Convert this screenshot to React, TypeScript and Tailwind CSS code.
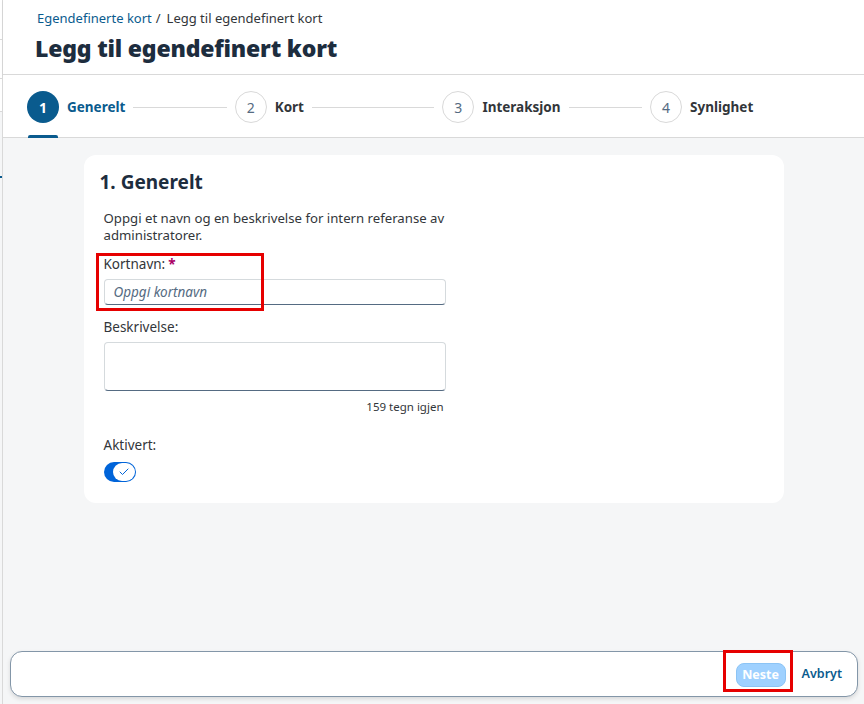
import { Check } from "lucide-react";

const steps = [
  { n: 1, label: "Generelt" },
  { n: 2, label: "Kort" },
  { n: 3, label: "Interaksjon" },
  { n: 4, label: "Synlighet" },
];

function Stepper() {
  return (
    <div className="h-[63px] bg-white border-b border-[#d9d9d9] flex items-center pl-[24px] pr-[6px] pt-[2px]">
      {steps.map((s, i) => {
        const active = i === 0;
        return (
          <div key={s.n} className="relative flex items-center w-[207.7px] h-full">
            <div
              className={
                active
                  ? "w-[32px] h-[32px] rounded-full flex items-center justify-center text-[14px] font-bold text-white bg-[#0a5b8e]"
                  : "w-[32px] h-[32px] rounded-full flex items-center justify-center text-[14px] text-[#556b82] bg-white border border-[#d9d9d9]"
              }
            >
              {s.n}
            </div>
            <span
              className={
                "ml-[8px] text-[13.5px] font-bold " + (active ? "text-[#0a5b8e]" : "text-[#32363a]")
              }
            >
              {s.label}
            </span>
            {i < steps.length - 1 && <div className="flex-1 h-px bg-[#d9d9d9] mx-[8px]" />}
            {active && (
              <div className="absolute left-[1px] bottom-[-1px] w-[30px] h-[3px] rounded-t-[2px] bg-[#0a5b8e]" />
            )}
          </div>
        );
      })}
    </div>
  );
}

export default function App() {
  return (
    <div
      className="flex w-[864px] h-[704px] overflow-hidden bg-white text-[#32363a]"
      style={{ fontFamily: '"Noto Sans", "Liberation Sans", sans-serif' }}
    >
      {/* sliver of previous page */}
      <div className="w-[3px] shrink-0 flex flex-col border-r border-[#d9d9d9] bg-white">
        <div className="h-[40px] border-b border-[#d9d9d9]" />
        <div className="h-[39px] border-b border-[#d9d9d9]" />
        <div className="h-[33px] border-b border-[#d9d9d9]" />
        <div className="h-[66px] border-b-2 border-[#0a5b8e] bg-[#f5f6f7]" />
        <div className="flex-1 bg-[#f5f6f7]" />
      </div>

      <div className="flex-1 flex flex-col min-w-0">
        {/* Header */}
        <div className="h-[75px] bg-white border-b border-[#d9d9d9] pl-[32px] pt-[9px] shadow-[0_1px_2px_rgba(0,0,0,0.06)]">
          <div className="pl-[2px] text-[13px] leading-[18px] text-[#32363a]">
            <span className="text-[#0a5b8e]">Egendefinerte kort</span>
            <span className="ml-[4px] mr-[6px]">/</span>
            <span>Legg til egendefinert kort</span>
          </div>
          <h1 className="mt-[6px] text-[23px] leading-[30px] font-black text-[#1d2d3e] tracking-[-0.2px]">
            Legg til egendefinert kort
          </h1>
        </div>

        <Stepper />

        {/* Content */}
        <div className="flex-1 bg-[#f5f6f7] flex flex-col">
          <div className="pt-[17px]">
            <div className="mx-auto w-[700px] h-[348px] bg-white rounded-[12px] pt-[14px] px-[16px]">
              <h2 className="text-[19px] leading-[26px] font-bold text-[#1d2d3e]">1. Generelt</h2>
              <div className="pl-[4px] w-[350px]">
                <p className="mt-[15px] text-[13.2px] leading-[17px] text-[#32363a]">
                  Oppgi et navn og en beskrivelse for intern referanse av administratorer.
                </p>

                <div className="relative mt-[11px]">
                  <label className="block text-[13.5px] leading-[18px] text-[#556b82]">
                    <span className="text-[#32363a]">Kortnavn:</span>
                    <span className="ml-[3px] font-bold text-[#aa0066]">*</span>
                  </label>
                  <div className="mt-[6px] h-[26px] w-[342px] rounded-[4px] border border-[#d5dadd] border-b-[#556b82] flex items-center px-[9px]">
                    <span className="text-[13.5px] italic text-[#556b82]">Oppgi kortnavn</span>
                  </div>
                  {/* annotation */}
                  <div className="absolute left-[-8px] top-[-2px] w-[168px] h-[58px] border-[3px] border-[#e60000]" />
                </div>

                <label className="block mt-[13px] text-[13.5px] leading-[18px] text-[#32363a]">Beskrivelse:</label>
                <div className="mt-[6px] h-[49px] w-[342px] rounded-[4px] border border-[#d5dadd] border-b-[#556b82]" />
                <div className="mt-[8px] w-[340px] text-right text-[11.5px] leading-[16px] text-[#32363a]">159 tegn igjen</div>

                <label className="block mt-[21px] text-[13.5px] leading-[18px] text-[#32363a]">Aktivert:</label>
                <div className="mt-[8px] w-[32px] h-[20px] rounded-full bg-[#0064d9] flex items-center justify-end pr-[1px]">
                  <div className="w-[22px] h-[18px] rounded-full bg-white flex items-center justify-center">
                    <Check className="w-[12px] h-[12px] text-[#0064d9]" strokeWidth={2} />
                  </div>
                </div>
              </div>
            </div>
          </div>

          <div className="flex-1" />

          {/* Footer */}
          <div className="ml-[7px] mr-[6px] mb-[7px] h-[46px] bg-white rounded-[12px] border border-[#8396a8] shadow-[0_2px_4px_rgba(0,0,0,0.12)] flex items-center justify-end pr-[15px]">
            <div className="relative">
              <button className="h-[24px] w-[50px] rounded-[8px] bg-[#9fd1ff] border border-[#8cc4f5] text-white text-[12.5px] font-bold">
                Neste
              </button>
              <div className="absolute left-[-13px] top-[-11px] w-[70px] h-[42px] border-[3px] border-[#e60000]" />
            </div>
            <button className="ml-[16px] text-[12.5px] font-semibold text-[#0a5b8e]">Avbryt</button>
          </div>
        </div>
      </div>
    </div>
  );
}
